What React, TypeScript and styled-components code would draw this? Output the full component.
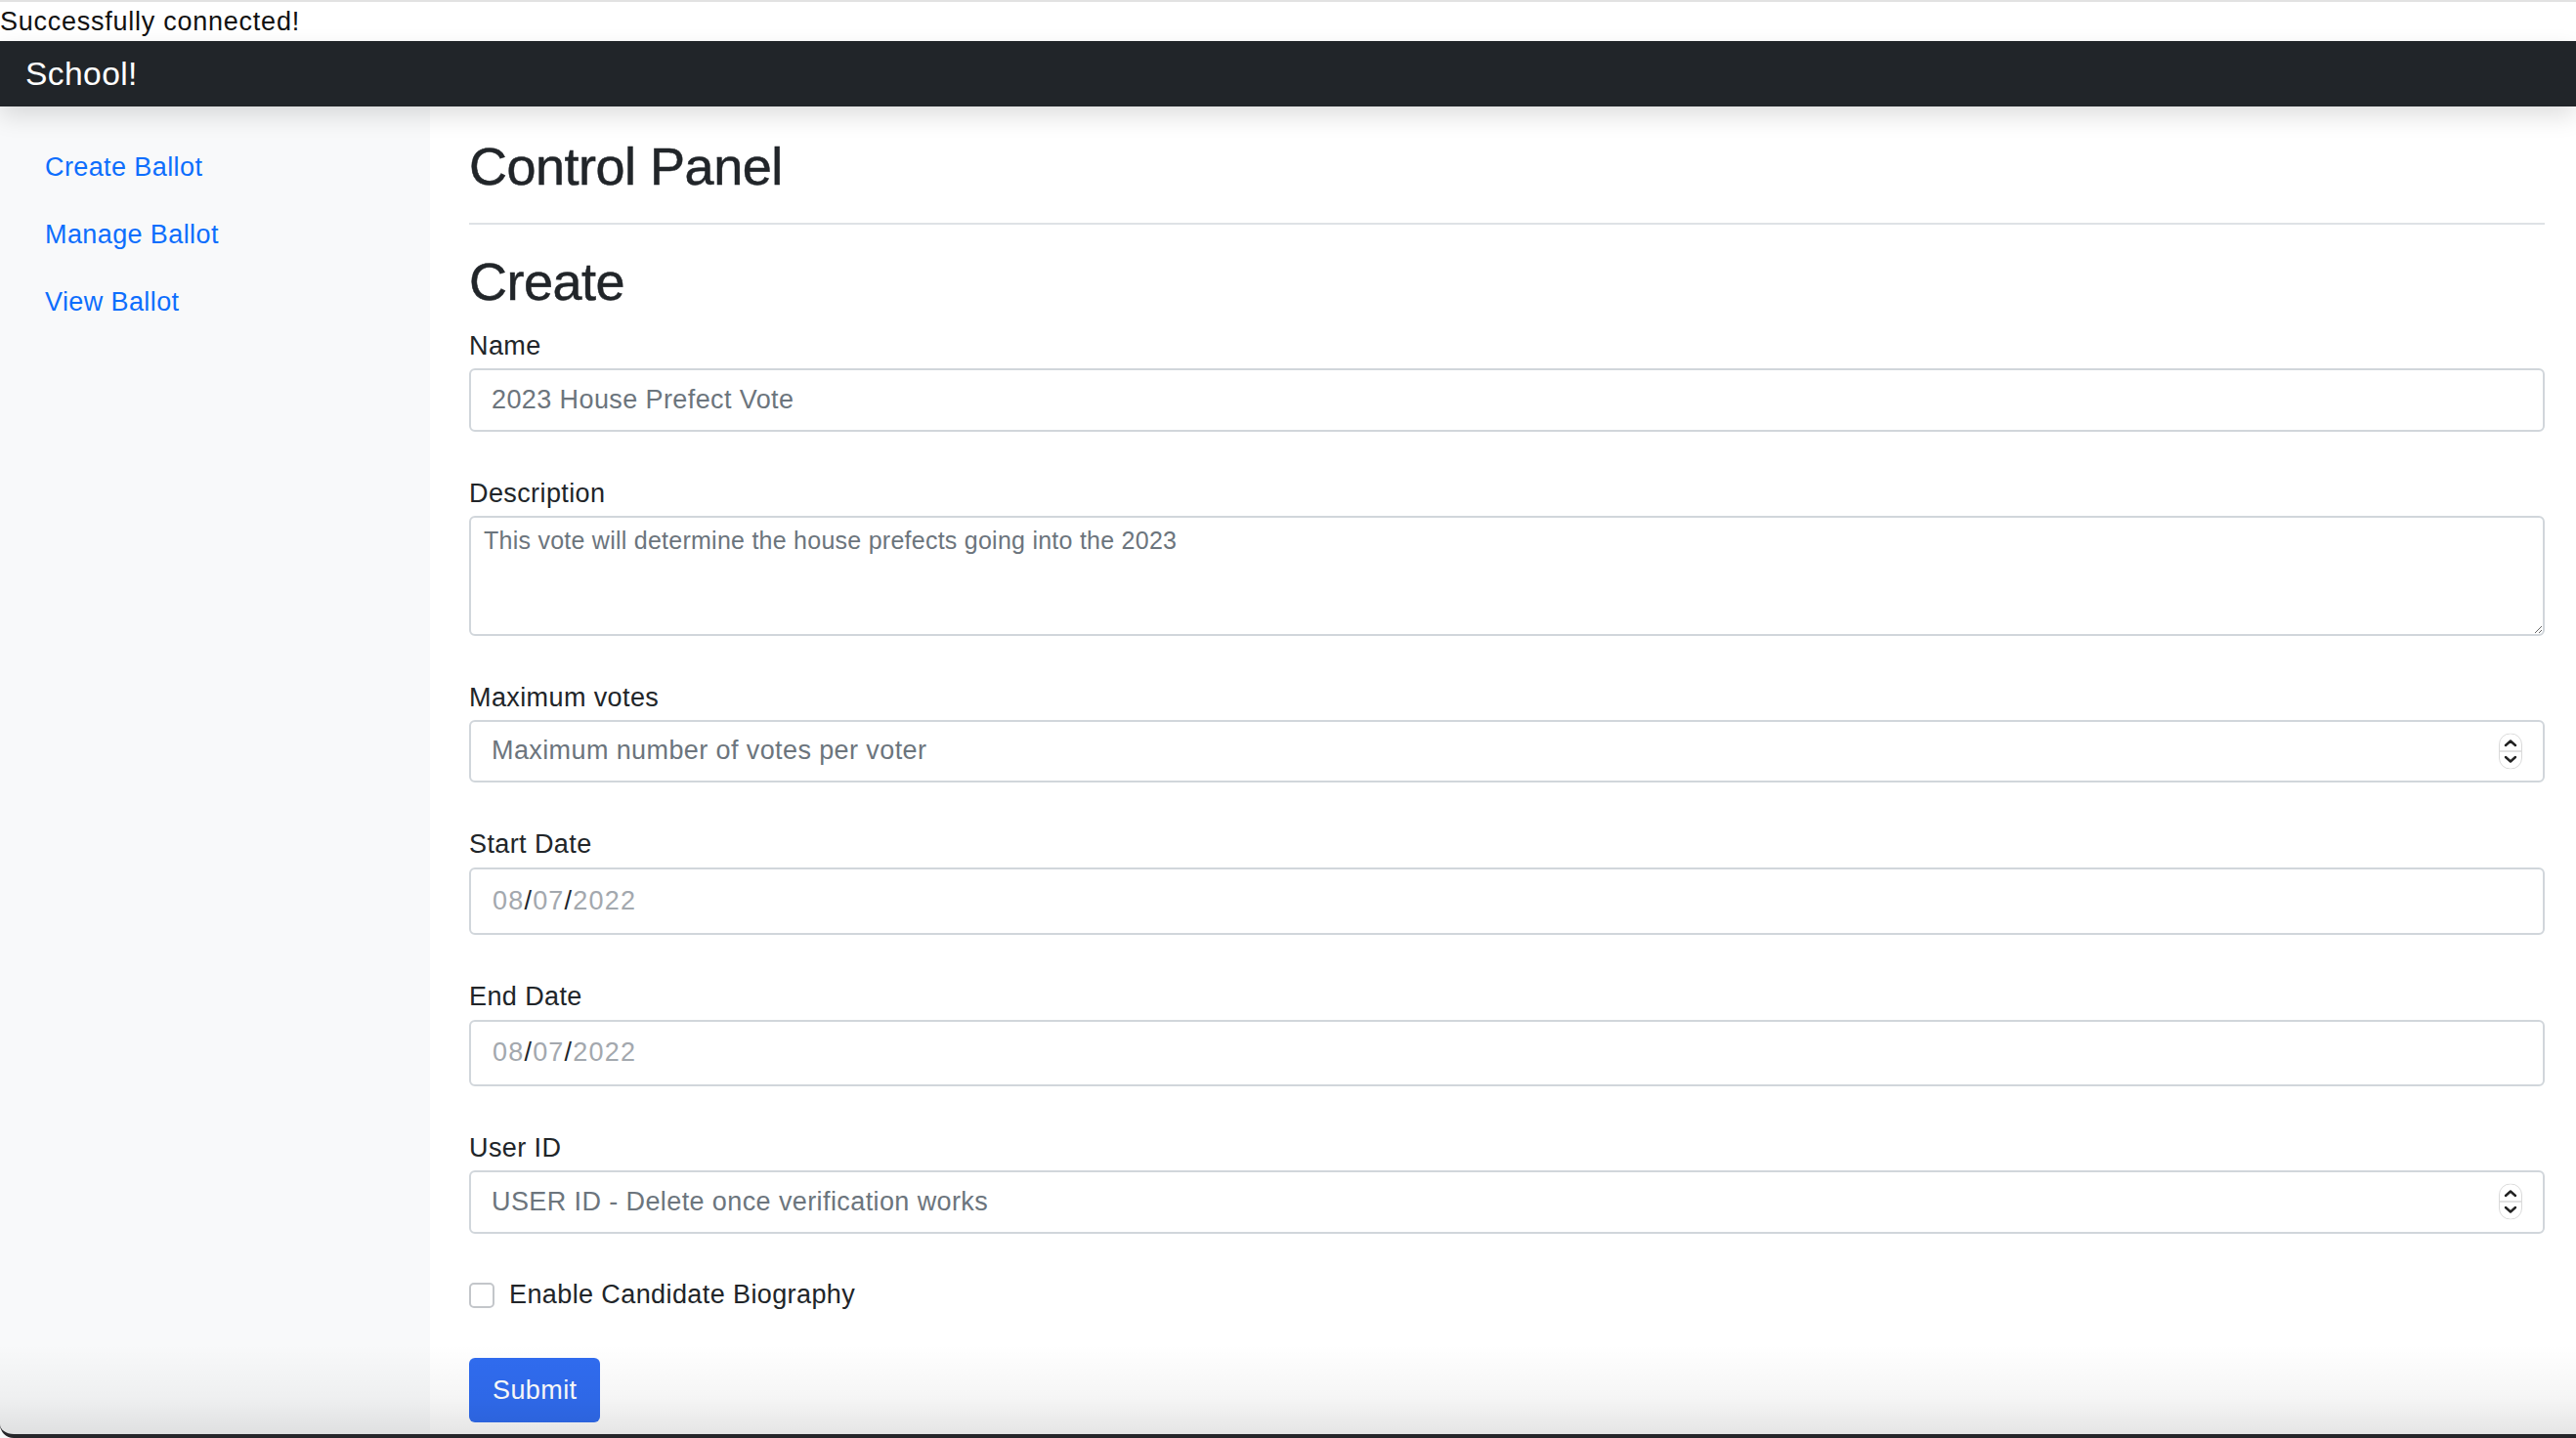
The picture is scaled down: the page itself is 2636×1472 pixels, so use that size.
import styled, { createGlobalStyle } from 'styled-components';

const GlobalStyle = createGlobalStyle`
  html, body {
    margin: 0;
    padding: 0;
    background: #fff;
    overflow: hidden;
  }
  body {
    font-family: "Liberation Sans", Arial, Helvetica, sans-serif;
    color: #212529;
    letter-spacing: 0.4px;
  }
  #root {
    height: 100vh;
  }
  * {
    box-sizing: border-box;
  }
`;

const Page = styled.div`
  position: relative;
  display: flex;
  flex-direction: column;
  height: 100vh;
  border-top: 2px solid #e2e2e2;

  &::after {
    content: '';
    position: absolute;
    left: 0;
    right: 0;
    bottom: 0;
    height: 92px;
    pointer-events: none;
    background: linear-gradient(
      to bottom,
      rgba(0, 0, 0, 0) 0%,
      rgba(0, 0, 0, 0.04) 60%,
      rgba(0, 0, 0, 0.1) 100%
    );
    border-bottom: 4px solid #26262a;
    border-bottom-left-radius: 14px;
  }
`;

const StatusLine = styled.div`
  font-size: 27px;
  line-height: 40px;
  letter-spacing: 0.75px;
  color: #111;
`;

const NavBar = styled.header`
  position: relative;
  z-index: 2;
  display: flex;
  align-items: center;
  height: 67px;
  padding: 0 26px;
  background: #212529;
  box-shadow: 0 10px 24px rgba(0, 0, 0, 0.13);
`;

const Brand = styled.span`
  color: #fff;
  font-size: 33.6px;
`;

const Body = styled.div`
  flex: 1;
  display: flex;
  min-height: 0;
`;

const Sidebar = styled.nav`
  width: 440px;
  flex-shrink: 0;
  display: flex;
  flex-direction: column;
  padding-top: 28px;
  background: #f8f9fa;
`;

const SideLink = styled.a`
  display: flex;
  align-items: center;
  height: 69px;
  padding-left: 46px;
  color: #0d6efd;
  font-size: 27px;
  text-decoration: none;
`;

const Main = styled.main`
  flex: 1;
  padding: 29px 32px 0 40px;
`;

const PageHeader = styled.div`
  padding-bottom: 12px;
  margin-bottom: 26px;
  border-bottom: 2px solid #dee2e6;
`;

const Heading = styled.h2`
  margin: 0 0 13px;
  font-size: 54px;
  line-height: 1.2;
  font-weight: 400;
  letter-spacing: -0.5px;
  -webkit-text-stroke: 0.5px #212529;
  color: #212529;
`;

const Form = styled.form`
  display: flex;
  flex-direction: column;
  gap: 43px;
`;

const Group = styled.div`
  display: flex;
  flex-direction: column;
`;

const Label = styled.label<{ $gap?: number }>`
  font-size: 27px;
  line-height: 40.5px;
  margin-bottom: ${({ $gap }) => $gap ?? 2.5}px;
`;

const FieldBox = styled.div`
  position: relative;
`;

const TextInput = styled.input`
  display: block;
  width: 100%;
  height: 65px;
  padding: 0 21px;
  border: 2px solid #d1d6db;
  border-radius: 6px;
  background: #fff;
  font-family: inherit;
  font-size: 27px;
  letter-spacing: 0.4px;
  color: #212529;
  outline: none;
  -moz-appearance: textfield;

  &::placeholder {
    color: #6c757d;
  }

  &::-webkit-outer-spin-button,
  &::-webkit-inner-spin-button {
    -webkit-appearance: none;
    margin: 0;
  }
`;

const TextArea = styled.textarea`
  display: block;
  width: 100%;
  height: 123px;
  padding: 5px 13px;
  border: 2px solid #d1d6db;
  border-radius: 6px;
  font-family: inherit;
  font-size: 25px;
  letter-spacing: 0.25px;
  line-height: 1.5;
  color: #212529;
  outline: none;
  resize: vertical;

  &::placeholder {
    color: #6c757d;
  }
`;

const Spinner = styled.div`
  position: absolute;
  right: 23px;
  top: 50%;
  transform: translateY(-50%);
  display: flex;
  pointer-events: none;
`;

const DateField = styled.div<{ $height: number }>`
  display: flex;
  align-items: center;
  height: ${({ $height }) => $height}px;
  padding: 0 22px;
  border: 2px solid #d1d6db;
  border-radius: 6px;
  font-size: 27px;
  letter-spacing: 1.2px;
`;

const DatePart = styled.span`
  color: #a3a8ae;
`;

const DateSep = styled.span`
  color: #212529;
`;

const CheckRow = styled.div`
  display: flex;
  align-items: center;
  gap: 15px;
  height: 40.5px;
`;

const CheckBox = styled.input`
  appearance: none;
  -webkit-appearance: none;
  margin: 0;
  width: 26px;
  height: 26px;
  border: 2px solid #c3c6ca;
  border-radius: 5px;
  background: #fff;
`;

const CheckLabel = styled.label`
  font-size: 27px;
  color: #212529;
`;

const SubmitButton = styled.button`
  align-self: flex-start;
  height: 66px;
  padding: 0 24px;
  margin-top: 1px;
  border: none;
  border-radius: 6px;
  background: #306cf0;
  color: #fff;
  font-family: inherit;
  font-size: 27px;
  letter-spacing: 0.4px;
`;

const SpinIcon = () => (
  <svg width="24" height="37" viewBox="0 0 24 37">
    <rect x="0.5" y="0.5" width="23" height="36" rx="11" fill="#fff" stroke="#dadada" />
    <line x1="1" y1="18.5" x2="23" y2="18.5" stroke="#d8d8d8" strokeWidth="1.5" />
    <path d="M7 12.5 L12 8 L17 12.5" fill="none" stroke="#222" strokeWidth="2.4" strokeLinecap="round" strokeLinejoin="round" />
    <path d="M7 24.5 L12 29 L17 24.5" fill="none" stroke="#222" strokeWidth="2.4" strokeLinecap="round" strokeLinejoin="round" />
  </svg>
);

const DateValue = () => (
  <>
    <DatePart>08</DatePart>
    <DateSep>/</DateSep>
    <DatePart>07</DatePart>
    <DateSep>/</DateSep>
    <DatePart>2022</DatePart>
  </>
);

const links = ['Create Ballot', 'Manage Ballot', 'View Ballot'];

export default function App() {
  return (
    <>
      <GlobalStyle />
      <Page>
        <StatusLine>Successfully connected!</StatusLine>
        <NavBar>
          <Brand>School!</Brand>
        </NavBar>
        <Body>
          <Sidebar>
            {links.map((l) => (
              <SideLink key={l} href="#">
                {l}
              </SideLink>
            ))}
          </Sidebar>
          <Main>
            <PageHeader>
              <Heading>Control Panel</Heading>
            </PageHeader>
            <Heading>Create</Heading>
            <Form onSubmit={(e) => e.preventDefault()}>
              <Group>
                <Label htmlFor="name">Name</Label>
                <TextInput id="name" placeholder="2023 House Prefect Vote" />
              </Group>
              <Group>
                <Label htmlFor="desc">Description</Label>
                <TextArea
                  id="desc"
                  placeholder="This vote will determine the house prefects going into the 2023"
                />
              </Group>
              <Group>
                <Label htmlFor="max">Maximum votes</Label>
                <FieldBox>
                  <TextInput
                    id="max"
                    type="number"
                    style={{ height: 64 }}
                    placeholder="Maximum number of votes per voter"
                  />
                  <Spinner>
                    <SpinIcon />
                  </Spinner>
                </FieldBox>
              </Group>
              <Group>
                <Label $gap={3.5}>Start Date</Label>
                <DateField $height={69}>
                  <DateValue />
                </DateField>
              </Group>
              <Group>
                <Label $gap={3.5}>End Date</Label>
                <DateField $height={68}>
                  <DateValue />
                </DateField>
              </Group>
              <Group>
                <Label htmlFor="uid">User ID</Label>
                <FieldBox>
                  <TextInput
                    id="uid"
                    type="number"
                    placeholder="USER ID - Delete once verification works"
                  />
                  <Spinner>
                    <SpinIcon />
                  </Spinner>
                </FieldBox>
              </Group>
              <CheckRow>
                <CheckBox type="checkbox" id="bio" />
                <CheckLabel htmlFor="bio">Enable Candidate Biography</CheckLabel>
              </CheckRow>
              <SubmitButton type="submit">Submit</SubmitButton>
            </Form>
          </Main>
        </Body>
      </Page>
    </>
  );
}
